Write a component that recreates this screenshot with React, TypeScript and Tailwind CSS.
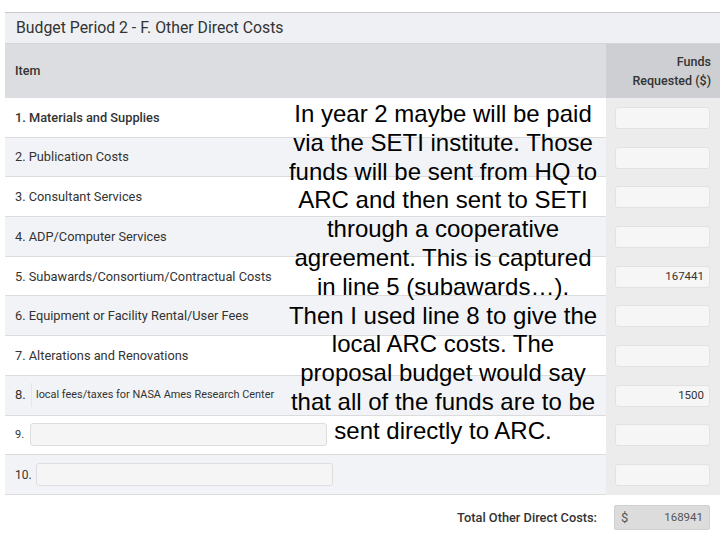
import React from "react";

const rows = [
  { label: "1. Materials and Supplies", value: "" },
  { label: "2. Publication Costs", value: "" },
  { label: "3. Consultant Services", value: "" },
  { label: "4. ADP/Computer Services", value: "" },
  { label: "5. Subawards/Consortium/Contractual Costs", value: "167441" },
  { label: "6. Equipment or Facility Rental/User Fees", value: "" },
  { label: "7. Alterations and Renovations", value: "" },
];

function Amount({ value }: { value: string }) {
  return (
    <div className="flex h-[22px] w-[95px] items-center justify-end rounded-[3px] border border-[#e2e2e2] bg-[#f6f6f6] px-[5px] text-[11.5px] text-[#333]">
      {value}
    </div>
  );
}

function Row({ index, children, value }: { index: number; children: React.ReactNode; value: string }) {
  return (
    <div className="grid h-[39.7px] grid-cols-[1fr_114px]">
      <div className={`flex items-center border-b border-[#dcdcdc] pl-[10px] ${index % 2 === 1 ? "bg-[#f2f3f6]" : "bg-white"}`}>
        {children}
      </div>
      <div className="flex items-center bg-[#ececec] pl-[9px]">
        <Amount value={value} />
      </div>
    </div>
  );
}

export default function App() {
  return (
    <div className="relative h-[540px] w-[720px] overflow-hidden bg-white pl-[5px] pt-[12px] [font-family:Roboto,sans-serif] text-[#333]">
      <div className="flex h-[31px] items-center border-t border-[#c9c9cc] bg-[#eff0f4] pl-[11px] text-[15.8px] text-[#333]">
        Budget Period 2 - F. Other Direct Costs
      </div>
      <div className="grid h-[55px] grid-cols-[1fr_114px] border-t border-[#d4d4d8]">
        <div className="flex items-center bg-[#dcdde0] pl-[10px] text-[12.5px] font-medium">Item</div>
        <div className="flex flex-col items-end justify-center bg-[#cdcfd2] pr-[9px] text-[12.5px] font-medium leading-[19px]">
          <span>Funds</span>
          <span>Requested ($)</span>
        </div>
      </div>

      {rows.map((r, i) => (
        <Row key={r.label} index={i} value={r.value}>
          <span className={`text-[12.8px] ${i === 0 ? "font-medium" : ""}`}>{r.label}</span>
        </Row>
      ))}

      <Row index={7} value="1500">
        <span className="w-[16px] text-[13px]">8.</span>
        <div className="flex h-[24px] w-[297px] items-center border-l border-[#e6e6e6] pl-[4px] text-[10.9px]">
          local fees/taxes for NASA Ames Research Center
        </div>
      </Row>
      <Row index={8} value="">
        <span className="w-[15px] text-[11px]">9.</span>
        <div className="h-[23px] w-[297px] rounded-[3px] border border-[#dedede] bg-[#f5f5f5]" />
      </Row>
      <Row index={9} value="">
        <span className="w-[21px] text-[12px]">10.</span>
        <div className="h-[23px] w-[297px] rounded-[3px] border border-[#dedede] bg-[#f5f5f5]" />
      </Row>

      <div className="flex h-[45px] items-center justify-end pr-[10px]">
        <span className="mr-[17px] text-[12.8px] font-medium">Total Other Direct Costs:</span>
        <div className="flex h-[25px] w-[96px] items-center justify-between rounded-[2px] border border-[#cfcfcf] bg-[#dcdcdc] px-[6px] text-[11.5px] text-[#555]">
          <span className="text-[13px]">$</span>
          <span>168941</span>
        </div>
      </div>

      <div className="absolute left-[288px] top-[100px] w-[310px] text-center [font-family:'Liberation_Sans',Arial,sans-serif] text-[24px] leading-[28.8px] text-black">
        In year 2 maybe will be paid via the SETI institute. Those funds will be sent from HQ to ARC and then sent to SETI through a cooperative agreement. This is captured in line 5 (subawards…). Then I used line 8 to give the local ARC costs. The proposal budget would say that all of the funds are to be sent directly to ARC.
      </div>
    </div>
  );
}
